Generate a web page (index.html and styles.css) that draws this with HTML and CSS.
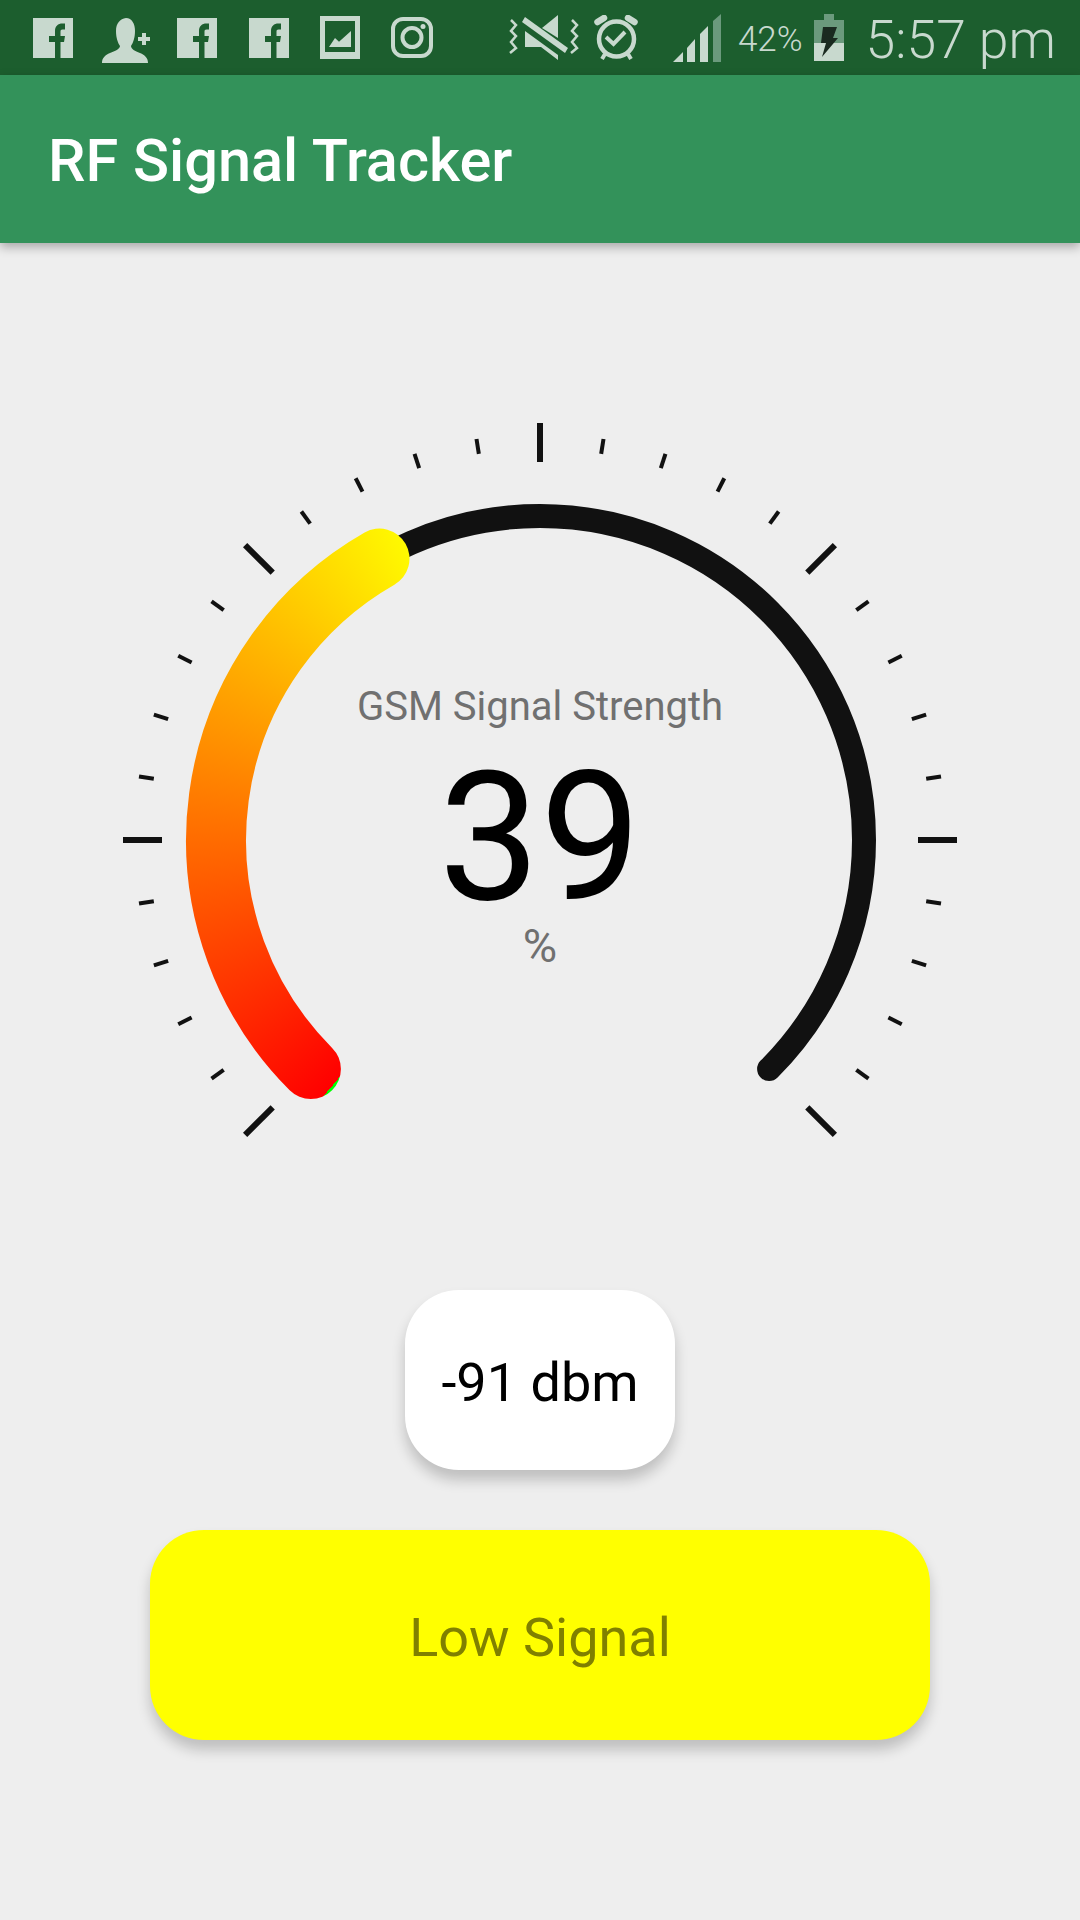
FILE: index.html
```html
<!DOCTYPE html>
<html lang="en">
<head>
    <meta charset="UTF-8">
    <meta name="viewport" content="width=device-width, initial-scale=1.0">
    <title>RF Signal Tracker</title>
    <link rel="stylesheet" href="styles.css">
</head>
<body>
    <div class="status-bar">
        <div class="status-left">
            <svg class="icon-fb" viewBox="0 0 40 40"><use href="#fb"/></svg>
            <svg class="icon-person" viewBox="0 0 48 45">
                <path class="ic" d="M24 0C30 0 33 6 33 13C33 20 31 25 29 28C29 31 33 33 38 35C43 37 46 40 46 45H0C0 40 3 37 8 35C13 33 18 31 18 28C16 25 14 20 14 13C14 5 18 1 24 0Z"/>
                <path class="ic" d="M40 15h4v4h4v4h-4v4h-4v-4h-4v-4h4Z"/>
            </svg>
            <svg class="icon-fb" viewBox="0 0 40 40"><use href="#fb"/></svg>
            <svg class="icon-fb icon-fb-last" viewBox="0 0 40 40"><use href="#fb"/></svg>
            <svg class="icon-photo" viewBox="0 0 40 43">
                <path class="ic" fill-rule="evenodd" d="M0 0H40V43H0ZM5 5V36H35V5Z"/>
                <path class="ic" d="M9 31L15 22L19 25.7L31 15V31Z"/>
            </svg>
            <svg class="icon-insta" viewBox="0 0 42 41">
                <rect class="ic-line" x="2" y="2" width="38" height="37" rx="10"/>
                <circle class="ic-line" cx="21" cy="20.5" r="9.5"/>
                <circle class="ic" cx="32" cy="9.5" r="2.5"/>
            </svg>
        </div>
        <div class="status-right">
            <svg class="icon-mute" viewBox="0 0 70 45">
                <polyline class="ic-thin" points="2,5 7,10 2,16 7,21 2,27 7,33 1,38"/>
                <polyline class="ic-thin" points="63,5 68,10 63,16 68,21 63,27 68,33 62,38"/>
                <path class="ic" d="M33 13L49 0V23Z"/>
                <path class="ic" d="M16 16L49 40V45L32 32H16Z"/>
                <path class="ic" d="M16 2L59 33L56 38L13 7Z"/>
            </svg>
            <svg class="icon-alarm" viewBox="0 0 44 45">
                <circle class="ic-line ic-heavy" cx="22.5" cy="24" r="17.5"/>
                <polyline class="ic-line" points="12,22 19.5,29 31,17"/>
                <line class="ic-bell" x1="3.5" y1="7" x2="10" y2="3"/>
                <line class="ic-bell" x1="34" y1="3" x2="40.5" y2="7"/>
                <line class="ic-line" x1="11" y1="39" x2="8" y2="44"/>
                <line class="ic-line" x1="34" y1="39" x2="37" y2="44"/>
            </svg>
            <svg class="icon-signal" viewBox="0 0 48 48">
                <path class="ic" d="M0 48L10 38V48Z"/>
                <path class="ic" d="M14 48V34L22 25V48Z"/>
                <path class="ic" d="M27 48V20L35 12V48Z"/>
                <path class="ic-dim" d="M40 48V7L48 0V48Z"/>
            </svg>
            <span class="battery-text">42%</span>
            <svg class="icon-battery" viewBox="0 0 30 47">
                <path class="ic-dim" d="M10 0H20V6H30V29H0V6H10Z"/>
                <rect class="ic" x="0" y="29" width="30" height="18"/>
                <path class="ic-bolt" d="M9 13H23L19 24H24L8 43L12 29H7Z"/>
            </svg>
            <span class="clock">5:57 pm</span>
        </div>
    </div>

    <div class="app-bar">RF Signal Tracker</div>

    <div class="main">
        <div class="gauge">
            <svg class="gauge-dial" viewBox="0 0 840 840">
                <defs>
                    <line id="major" class="tick-major" x1="420" y1="3" x2="420" y2="42"/>
                    <line id="minor" class="tick-minor" x1="420" y1="14" x2="420" y2="29"/>
                    <mask id="value-mask" maskUnits="userSpaceOnUse" x="0" y="0" width="840" height="840">
                        <path class="value-arc" d="M190.9 649.1A324 324 0 0 1 259.5 138.6"/>
                    </mask>
                </defs>

                <use href="#major" transform="rotate(-135 420 420)"/>
                <use href="#minor" transform="rotate(-126 420 420)"/>
                <use href="#minor" transform="rotate(-117 420 420)"/>
                <use href="#minor" transform="rotate(-108 420 420)"/>
                <use href="#minor" transform="rotate(-99 420 420)"/>
                <use href="#major" transform="rotate(-90 420 420)"/>
                <use href="#minor" transform="rotate(-81 420 420)"/>
                <use href="#minor" transform="rotate(-72 420 420)"/>
                <use href="#minor" transform="rotate(-63 420 420)"/>
                <use href="#minor" transform="rotate(-54 420 420)"/>
                <use href="#major" transform="rotate(-45 420 420)"/>
                <use href="#minor" transform="rotate(-36 420 420)"/>
                <use href="#minor" transform="rotate(-27 420 420)"/>
                <use href="#minor" transform="rotate(-18 420 420)"/>
                <use href="#minor" transform="rotate(-9 420 420)"/>
                <use href="#major"/>
                <use href="#minor" transform="rotate(9 420 420)"/>
                <use href="#minor" transform="rotate(18 420 420)"/>
                <use href="#minor" transform="rotate(27 420 420)"/>
                <use href="#minor" transform="rotate(36 420 420)"/>
                <use href="#major" transform="rotate(45 420 420)"/>
                <use href="#minor" transform="rotate(54 420 420)"/>
                <use href="#minor" transform="rotate(63 420 420)"/>
                <use href="#minor" transform="rotate(72 420 420)"/>
                <use href="#minor" transform="rotate(81 420 420)"/>
                <use href="#major" transform="rotate(90 420 420)"/>
                <use href="#minor" transform="rotate(99 420 420)"/>
                <use href="#minor" transform="rotate(108 420 420)"/>
                <use href="#minor" transform="rotate(117 420 420)"/>
                <use href="#minor" transform="rotate(126 420 420)"/>
                <use href="#major" transform="rotate(135 420 420)"/>

                <path class="track" d="M190.9 649.1A324 324 0 1 1 649.1 649.1"/>
                <foreignObject x="0" y="0" width="840" height="840" mask="url(#value-mask)">
                    <div class="sweep"></div>
                </foreignObject>
            </svg>
            <div class="gauge-text">
                <div class="gauge-label">GSM Signal Strength</div>
                <div class="gauge-value">39</div>
                <div class="gauge-unit">%</div>
            </div>
        </div>

        <div class="dbm-pill">-91 dbm</div>
        <div class="signal-button">Low Signal</div>
    </div>

    <svg class="sprites" width="0" height="0">
        <symbol id="fb" viewBox="0 0 40 40">
            <rect class="ic" width="40" height="40"/>
            <path class="ic-cut" d="M22 40V24H16V18H22V13C22 8 25 5.5 29.5 5.5H32V11.5H29.5C28 11.5 27.5 12.2 27.5 13.5V18H32L31 24H27.5V40Z"/>
        </symbol>
    </svg>
</body>
</html>
```

FILE: styles.css
```css
html, body {
    margin: 0;
    padding: 0;
}

body {
    width: 1080px;
    height: 1920px;
    overflow: hidden;
    background-color: #eeeeee;
    font-family: Roboto, sans-serif;
}

.sprites {
    position: absolute;
}

/* status bar */
.status-bar {
    display: flex;
    justify-content: space-between;
    align-items: center;
    height: 75px;
    padding: 0 24px 0 33px;
    background-color: #1c5e2e;
    color: #c8d9ce;
}

.status-left,
.status-right {
    display: flex;
    align-items: center;
}

.status-left {
    gap: 29px;
}

.status-left svg,
.status-right svg {
    display: block;
    flex: none;
}

.ic { fill: #c8d9ce; }
.ic-dim { fill: #6b9a7d; }
.ic-cut { fill: #1c5e2e; }
.ic-bolt { fill: #1a2a20; }

.ic-line {
    fill: none;
    stroke: #c8d9ce;
    stroke-width: 4;
}

.ic-heavy { stroke-width: 4.5; }

.ic-thin {
    fill: none;
    stroke: #c8d9ce;
    stroke-width: 2.5;
}

.ic-bell {
    stroke: #c8d9ce;
    stroke-width: 6.5;
    stroke-linecap: round;
}

.icon-fb { width: 40px; height: 40px; }
.icon-fb-last { margin-left: 3px; }
.icon-person { width: 48px; height: 45px; margin: 6px -2px 0 0; }
.icon-photo { width: 40px; height: 43px; margin-left: 2px; }
.icon-insta { width: 42px; height: 41px; margin-left: 2px; }
.icon-mute { width: 70px; height: 45px; }
.icon-alarm { width: 44px; height: 45px; margin-left: 15px; }
.icon-signal { width: 48px; height: 48px; margin-left: 35px; }
.icon-battery { width: 30px; height: 47px; margin-left: 11px; }

.battery-text {
    margin-left: 17px;
    padding-top: 4px;
    font-size: 35px;
    font-weight: 300;
}

.clock {
    margin-left: 22px;
    padding-top: 4px;
    font-size: 53.5px;
    font-weight: 300;
}

/* app bar */
.app-bar {
    position: relative;
    display: flex;
    align-items: center;
    height: 168px;
    padding: 4px 0 0 48px;
    box-sizing: border-box;
    background-color: #33925a;
    color: #fff;
    font-size: 59.5px;
    font-weight: 500;
    box-shadow: 0 4px 10px rgba(0, 0, 0, 0.3);
}

/* gauge */
.main {
    display: flex;
    flex-direction: column;
    align-items: center;
    padding-top: 177px;
}

.gauge {
    display: grid;
    width: 840px;
    height: 840px;
}

.gauge-dial,
.gauge-text {
    grid-area: 1 / 1;
}

.gauge-dial {
    display: block;
    width: 840px;
    height: 840px;
}

.tick-major {
    stroke: #111;
    stroke-width: 6;
}

.tick-minor {
    stroke: #111;
    stroke-width: 4;
}

.track {
    fill: none;
    stroke: #111;
    stroke-width: 24;
    stroke-linecap: round;
}

.value-arc {
    fill: none;
    stroke: #fff;
    stroke-width: 60;
    stroke-linecap: round;
}

.sweep {
    width: 840px;
    height: 840px;
    background: conic-gradient(from 220.2deg at 50% 50%, #ff0000 0deg, #ffff00 118deg, #00ff00 359deg);
}

.gauge-text {
    display: flex;
    flex-direction: column;
    align-items: center;
    padding-top: 262px;
}

.gauge-label {
    margin-bottom: 23px;
    color: #707070;
    font-size: 40px;
    line-height: 50px;
}

.gauge-value {
    color: #000;
    font-size: 180px;
    line-height: 166px;
}

.gauge-unit {
    color: #707070;
    font-size: 47px;
    line-height: 50px;
}

/* readouts */
.dbm-pill {
    display: flex;
    justify-content: center;
    align-items: center;
    box-sizing: border-box;
    width: 270px;
    height: 180px;
    margin-top: 30px;
    padding-top: 4px;
    border-radius: 54px;
    background-color: #fff;
    color: #000;
    font-size: 54px;
    box-shadow: 0 10px 14px rgba(0, 0, 0, 0.2);
}

.signal-button {
    display: flex;
    justify-content: center;
    align-items: center;
    box-sizing: border-box;
    width: 780px;
    height: 210px;
    margin-top: 60px;
    padding-top: 4px;
    border-radius: 54px;
    background-color: #ffff00;
    color: #808000;
    font-size: 54px;
    box-shadow: 0 10px 14px rgba(0, 0, 0, 0.2);
}
```
